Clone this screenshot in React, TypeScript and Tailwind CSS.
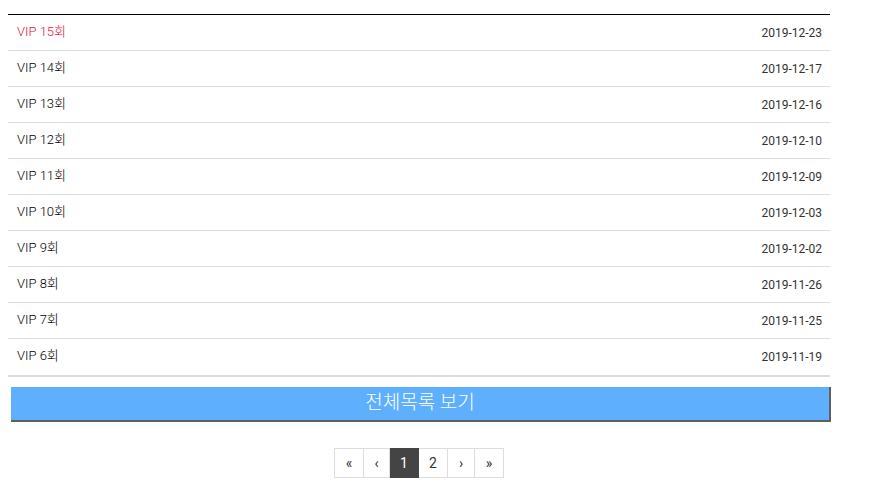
const rows = [
  { title: "VIP 15회", date: "2019-12-23" },
  { title: "VIP 14회", date: "2019-12-17" },
  { title: "VIP 13회", date: "2019-12-16" },
  { title: "VIP 12회", date: "2019-12-10" },
  { title: "VIP 11회", date: "2019-12-09" },
  { title: "VIP 10회", date: "2019-12-03" },
  { title: "VIP 9회", date: "2019-12-02" },
  { title: "VIP 8회", date: "2019-11-26" },
  { title: "VIP 7회", date: "2019-11-25" },
  { title: "VIP 6회", date: "2019-11-19" },
];

const pages = [
  { label: "«", w: "w-[30px]" },
  { label: "‹", w: "w-[26px]" },
  { label: "1", w: "w-[29px]", active: true },
  { label: "2", w: "w-[29px]" },
  { label: "›", w: "w-[27px]" },
  { label: "»", w: "w-[29px]" },
];

const App = () => {
  return (
    <div
      className="w-[874px] h-[497px] bg-white"
      style={{ fontFamily: 'Roboto, "Noto Sans CJK KR", sans-serif' }}
    >
      <div className="w-[830px] pl-2 pt-[14px]">
        <ul className="border-t border-black border-b-2 border-b-[#ddd]">
          {rows.map((row, idx) => (
            <li
              key={row.title}
              className={`flex h-[36px] items-center justify-between pl-[9px] pr-2 ${
                idx < rows.length - 1 ? "border-b border-[#ddd]" : ""
              }`}
            >
              <span
                className={`-mt-[2px] text-[13px] font-light ${
                  idx === 0 ? "text-[#e0143c]" : "text-black"
                }`}
              >
                {row.title}
              </span>
              <span className="text-[12px] text-[#333]">{row.date}</span>
            </li>
          ))}
        </ul>

        <button className="mt-[10px] ml-[3px] flex h-[35px] w-[820px] items-center justify-center border-r-2 border-b-2 border-[#5f5f5f] bg-[#5eb0ff] text-[19px] font-light text-white">
          전체목록 보기
        </button>

        <div className="mt-[26px] flex justify-center">
          <div className="flex">
            {pages.map((p, idx) => (
              <div
                key={p.label}
                className={`flex h-[30px] items-center justify-center text-[14px] ${p.w} ${
                  idx === 0 ? "border" : "border border-l-0"
                } ${
                  p.active
                    ? "border-[#444] bg-[#444] text-white"
                    : "border-[#ddd] text-[#333]"
                }`}
              >
                {p.label}
              </div>
            ))}
          </div>
        </div>
      </div>
    </div>
  );
};

export default App;
